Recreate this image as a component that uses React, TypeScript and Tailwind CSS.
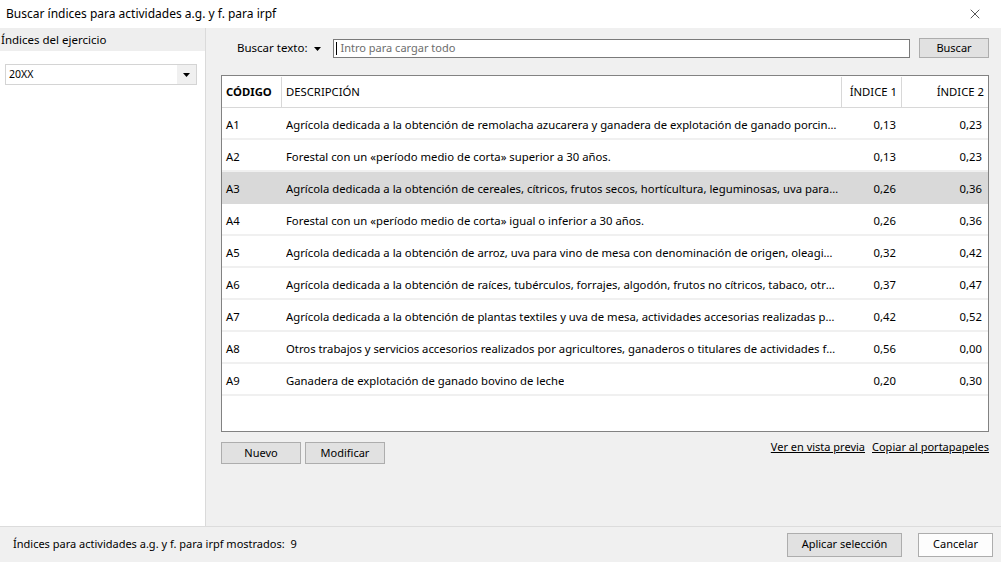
import { X } from "lucide-react";

const rows = [
  { code: "A1", desc: "Agrícola dedicada a la obtención de remolacha azucarera y ganadera de explotación de ganado porcino de carne y avicultura", i1: "0,13", i2: "0,23" },
  { code: "A2", desc: "Forestal con un «período medio de corta» superior a 30 años.", i1: "0,13", i2: "0,23" },
  { code: "A3", desc: "Agrícola dedicada a la obtención de cereales, cítricos, frutos secos, hortícultura, leguminosas, uva para vino sin denominación de origen", i1: "0,26", i2: "0,36" },
  { code: "A4", desc: "Forestal con un «período medio de corta» igual o inferior a 30 años.", i1: "0,26", i2: "0,36" },
  { code: "A5", desc: "Agrícola dedicada a la obtención de arroz, uva para vino de mesa con denominación de origen, oleaginosas y otros productos", i1: "0,32", i2: "0,42" },
  { code: "A6", desc: "Agrícola dedicada a la obtención de raíces, tubérculos, forrajes, algodón, frutos no cítricos, tabaco, otros productos", i1: "0,37", i2: "0,47" },
  { code: "A7", desc: "Agrícola dedicada a la obtención de plantas textiles y uva de mesa, actividades accesorias realizadas por agricultores", i1: "0,42", i2: "0,52" },
  { code: "A8", desc: "Otros trabajos y servicios accesorios realizados por agricultores, ganaderos o titulares de actividades forestales", i1: "0,56", i2: "0,00" },
  { code: "A9", desc: "Ganadera de explotación de ganado bovino de leche", i1: "0,20", i2: "0,30" },
];

function Caret() {
  return (
    <svg width="7" height="4" viewBox="0 0 7 4">
      <path d="M0 0h7L3.5 4z" fill="#000" />
    </svg>
  );
}

export default function App() {
  return (
    <div className="w-[1001px] h-[562px] flex flex-col bg-[#f0f0f0] text-black text-[11px] overflow-hidden" style={{ fontFamily: '"Noto Sans", "Open Sans", sans-serif' }}>
      {/* Title bar */}
      <div className="h-[28px] bg-white flex items-center justify-between pl-[6px] pr-[18px] shrink-0 text-[12px]">
        <span>Buscar índices para actividades a.g. y f. para irpf</span>
        <X size={16} strokeWidth={1} />
      </div>

      {/* Main */}
      <div className="flex flex-1 min-h-0 border-b border-[#dcdcdc]">
        {/* Left panel */}
        <div className="w-[206px] flex flex-col border-r border-[#dadada] shrink-0">
          <div className="h-[23px] bg-[#eeeeee] flex items-center pl-[1px] text-[11.5px]">Índices del ejercicio</div>
          <div className="flex-1 bg-white pt-[13px] pl-[5px] pr-[8px]">
            <div className="h-[21px] border border-[#d4d4d4] flex items-center bg-white">
              <span className="flex-1 pl-[3px] text-[10.5px]">20XX</span>
              <div className="w-[19px] h-full bg-[#f0f0f0] flex items-center justify-center">
                <Caret />
              </div>
            </div>
          </div>
        </div>

        {/* Right panel */}
        <div className="flex-1 flex flex-col pl-[15px] pr-[12px] pt-[10px]">
          {/* Search row */}
          <div className="flex items-center h-[20px]">
            <span className="ml-[16px] text-[11.5px]">Buscar texto:</span>
            <span className="ml-[7px] mt-[1px] flex"><Caret /></span>
            <div className="ml-[12px] w-[577px] h-[19px] border border-[#7a7a7a] bg-white flex items-center pl-[2px]">
              <span className="w-px h-[13px] bg-black mr-[3px]" />
              <span className="text-[#6d6d6d]">Intro para cargar todo</span>
            </div>
            <button className="ml-auto w-[70px] h-[20px] bg-[#e1e1e1] border border-[#adadad] flex items-center justify-center">Buscar</button>
          </div>

          {/* Table */}
          <div className="mt-[17px] h-[357px] border border-[#828282] bg-white flex flex-col text-[11.3px]">
            <div className="h-[32px] flex border-b border-[#d8d8d8] shrink-0 pt-[1px]">
              <div className="w-[60px] pl-[4px] flex items-center font-bold border-r border-[#d8d8d8]">CÓDIGO</div>
              <div className="w-[560px] pl-[4px] flex items-center border-r border-[#d8d8d8]">DESCRIPCIÓN</div>
              <div className="w-[60px] pr-[4px] flex items-center justify-end border-r border-[#d8d8d8]">ÍNDICE 1</div>
              <div className="flex-1 pr-[4px] flex items-center justify-end">ÍNDICE 2</div>
            </div>
            {rows.map((r) => (
              <div key={r.code} className={`h-[32px] flex border-b-2 shrink-0 pt-[4px] ${r.code === "A3" ? "bg-[#d9d9d9] border-[#d9d9d9]" : "border-[#f0f0f0]"}`}>
                <div className="w-[60px] pl-[4px] flex items-center">{r.code}</div>
                <div className="w-[561px] pl-[4px] pr-[4px] flex items-center min-w-0">
                  <span className="truncate">{r.desc}</span>
                </div>
                <div className="w-[60px] pr-[7px] flex items-center justify-end">{r.i1}</div>
                <div className="flex-1 pr-[6px] flex items-center justify-end">{r.i2}</div>
              </div>
            ))}
          </div>

          {/* Buttons row */}
          <div className="mt-[10px] flex items-center">
            <button className="w-[80px] h-[22px] border border-[#adadad] bg-[#e1e1e1] flex items-center justify-center">Nuevo</button>
            <button className="ml-[4px] w-[80px] h-[22px] border border-[#adadad] bg-[#e1e1e1] flex items-center justify-center">Modificar</button>
            <div className="ml-auto flex gap-[7px] mt-[-11px]">
              <span className="underline">Ver en vista previa</span>
              <span className="underline">Copiar al portapapeles</span>
            </div>
          </div>
        </div>
      </div>

      {/* Status bar */}
      <div className="h-[35px] flex items-center pl-[13px] pr-[8px] shrink-0">
        <span>Índices para actividades a.g. y f. para irpf mostrados:&nbsp; 9</span>
        <button className="ml-auto w-[115px] h-[24px] border border-[#adadad] bg-[#e1e1e1] flex items-center justify-center">Aplicar selección</button>
        <button className="ml-[16px] w-[75px] h-[24px] border border-[#adadad] bg-[#fdfdfd] flex items-center justify-center">Cancelar</button>
      </div>
    </div>
  );
}
